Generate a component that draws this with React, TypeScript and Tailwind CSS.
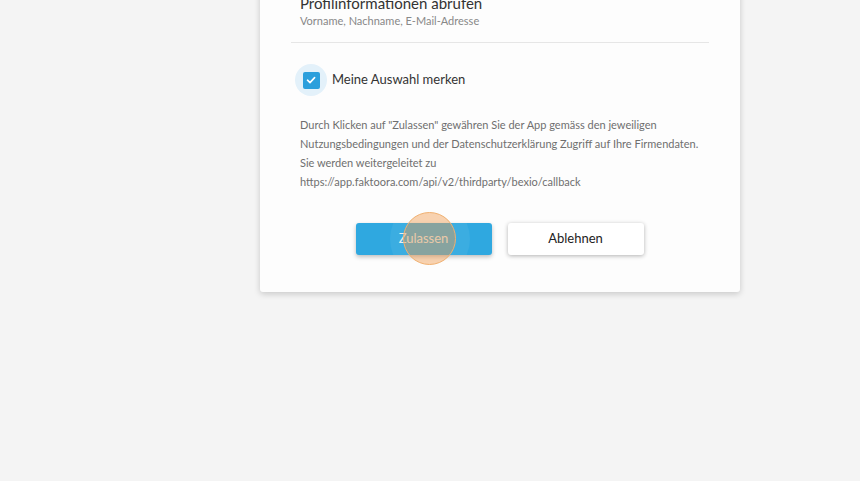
import React from "react";

export default function App() {
  return (
    <div className="w-[860px] h-[481px] bg-[#f4f4f4] overflow-hidden" style={{ fontFamily: "Lato, 'Open Sans', sans-serif" }}>
      <div className="ml-[260px] w-[480px] mt-[-17px] bg-[#fdfdfd] rounded-b-[3px] shadow-[0_2px_6px_rgba(0,0,0,0.18)] pb-[37px]">
        <div className="px-[40px] pt-[10px]">
          <div className="text-[15px] leading-[20px] text-[#333]">Profilinformationen abrufen</div>
          <div className="text-[11px] leading-[14px] text-[#888] mt-[1px]">Vorname, Nachname, E-Mail-Adresse</div>
        </div>
        <div className="mx-[31px] mt-[14px] h-px bg-[#e6e6e6]"></div>
        <div className="flex items-center ml-[35px] mt-[21px]">
          <div className="w-[32px] h-[32px] rounded-full bg-[#e3f1fa] flex items-center justify-center">
            <div className="w-[17px] h-[17px] rounded-[2px] bg-[#2b9fdc] flex items-center justify-center">
              <svg width="12" height="12" viewBox="0 0 12 12" fill="none">
                <path d="M2.5 6.2 L5 8.6 L9.6 3.6" stroke="white" strokeWidth="1.6" strokeLinecap="round" strokeLinejoin="round" />
              </svg>
            </div>
          </div>
          <span className="ml-[5px] text-[13px] text-[#333]">Meine Auswahl merken</span>
        </div>
        <div className="px-[40px] mt-[19px] text-[11px] leading-[19px] text-[#6f6f6f]">
          <div>Durch Klicken auf "Zulassen" gewähren Sie der App gemäss den jeweiligen</div>
          <div>Nutzungsbedingungen und der Datenschutzerklärung Zugriff auf Ihre Firmendaten.</div>
          <div>Sie werden weitergeleitet zu</div>
          <div>https://app.faktoora.com/api/v2/thirdparty/bexio/callback</div>
        </div>
        <div className="flex justify-center gap-[16px] mt-[32px] pr-[1px]">
          <div className="relative">
            <button className="w-[136px] h-[32px] rounded-[3px] bg-[#2fa8e0] text-[13px] text-[#e8eef0] shadow-[0_2px_4px_rgba(0,0,0,0.25)] overflow-hidden relative">
              <span className="absolute left-[34px] top-[-24px] w-[80px] h-[80px] rounded-full bg-[rgba(255,255,255,0.06)]"></span>
              <span className="relative">Zulassen</span>
            </button>
            <div className="absolute left-[47px] top-[-11px] w-[53px] h-[53px] rounded-full border-[1.5px] border-[#f0b070] bg-[rgba(240,150,70,0.42)] pointer-events-none"></div>
          </div>
          <button className="w-[136px] h-[32px] rounded-[3px] bg-white text-[13px] text-[#222] shadow-[0_1px_4px_rgba(0,0,0,0.3)]">Ablehnen</button>
        </div>
      </div>
    </div>
  );
}
